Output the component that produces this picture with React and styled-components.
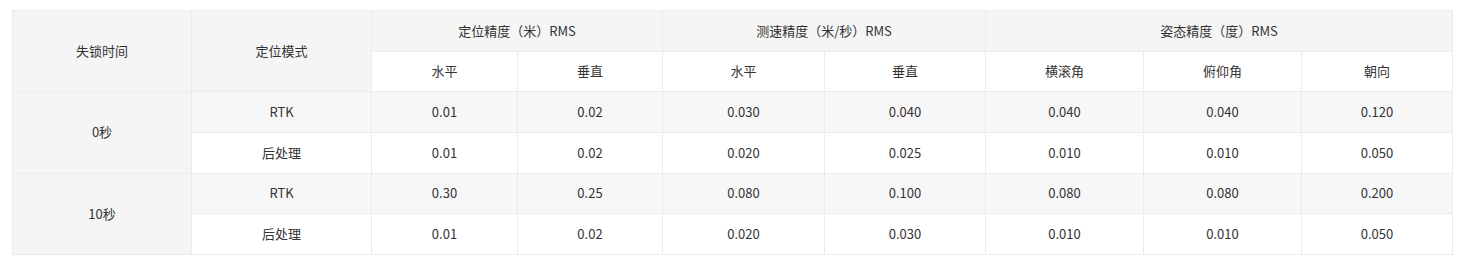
import React from "react";
import styled, { createGlobalStyle } from "styled-components";

const GlobalStyle = createGlobalStyle`
  body {
    margin: 0;
    background: #fff;
    font-family: "Segoe UI", "Noto Sans CJK SC", sans-serif;
  }
`;

const Wrapper = styled.div`
  padding: 10px 0 0 12px;
`;

const Table = styled.table`
  border-collapse: collapse;
  table-layout: fixed;
  width: 1440px;
  font-size: 13px;
  color: #333;
  font-family: "Noto Sans CJK SC", sans-serif;
`;

const Row = styled.tr`
  height: 40.67px;
  background: ${(p) => (p.$shaded ? "#f7f7f7" : "#fff")};
`;

const Cell = styled.td`
  border: 1px solid #ebebeb;
  text-align: center;
  vertical-align: middle;
  padding: 0 8px;
  line-height: 20px;
  background: ${(p) => (p.$head ? "#f5f5f5" : "inherit")};
`;

const widths = [179, 180, 146, 145, 162, 161, 158, 158, 151];

const rows = [
  { time: "0秒", mode: "RTK", vals: ["0.01", "0.02", "0.030", "0.040", "0.040", "0.040", "0.120"] },
  { mode: "后处理", vals: ["0.01", "0.02", "0.020", "0.025", "0.010", "0.010", "0.050"] },
  { time: "10秒", mode: "RTK", vals: ["0.30", "0.25", "0.080", "0.100", "0.080", "0.080", "0.200"] },
  { mode: "后处理", vals: ["0.01", "0.02", "0.020", "0.030", "0.010", "0.010", "0.050"] },
];

export default function App() {
  return (
    <Wrapper>
      <GlobalStyle />
      <Table>
        <colgroup>
          {widths.map((w, i) => (
            <col key={i} style={{ width: w }} />
          ))}
        </colgroup>
        <tbody>
          <Row>
            <Cell $head rowSpan={2}>失锁时间</Cell>
            <Cell $head rowSpan={2}>定位模式</Cell>
            <Cell $head colSpan={2}>定位精度（米）RMS</Cell>
            <Cell $head colSpan={2}>测速精度（米/秒）RMS</Cell>
            <Cell $head colSpan={3}>姿态精度（度）RMS</Cell>
          </Row>
          <Row>
            <Cell>水平</Cell>
            <Cell>垂直</Cell>
            <Cell>水平</Cell>
            <Cell>垂直</Cell>
            <Cell>横滚角</Cell>
            <Cell>俯仰角</Cell>
            <Cell>朝向</Cell>
          </Row>
          {rows.map((r, i) => (
            <Row key={i} $shaded={r.mode === "RTK"}>
              {r.time && (
                <Cell $head rowSpan={2}>
                  {r.time}
                </Cell>
              )}
              <Cell>{r.mode}</Cell>
              {r.vals.map((v, j) => (
                <Cell key={j}>{v}</Cell>
              ))}
            </Row>
          ))}
        </tbody>
      </Table>
    </Wrapper>
  );
}
